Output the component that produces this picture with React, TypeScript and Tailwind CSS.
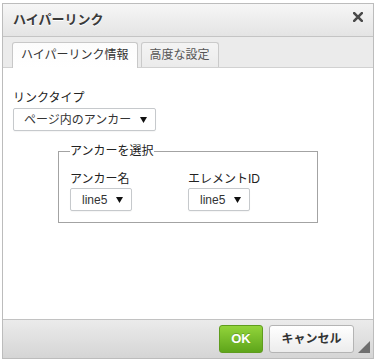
import React from "react";

const FONT = { fontFamily: '"Liberation Sans", "Noto Sans CJK JP", sans-serif' };

function Arrow() {
  return (
    <svg width="7" height="6" viewBox="0 0 7 6" className="shrink-0">
      <polygon points="0,0 7,0 3.5,6" fill="#111" />
    </svg>
  );
}

function Select({ label, className }: { label: string; className: string }) {
  return (
    <div
      className={`flex h-[23px] items-center justify-between rounded-[2px] border border-[#c6c9cc] bg-white pr-[8px] text-[12px] text-[#333] shadow-[0_1px_1px_rgba(0,0,0,0.04)] ${className}`}
    >
      <span>{label}</span>
      <Arrow />
    </div>
  );
}

export default function App() {
  return (
    <div className="h-[362px] w-[377px] bg-white pl-[2px] pt-[3px]" style={FONT}>
      <div className="flex h-[356px] w-[372px] flex-col border border-[#bcbcbc] bg-white">
        {/* title */}
        <div className="flex h-[33px] shrink-0 items-center justify-between border-b border-[#c4c4c4] bg-gradient-to-b from-[#f6f6f6] to-[#e4e4e4] pl-[10px]">
          <span className="text-[13px] font-bold leading-4 text-[#3a3a3a] [text-shadow:0_1px_0_#fff]">
            ハイパーリンク
          </span>
          <svg width="10" height="10" viewBox="0 0 10 10" className="mb-[7px] mr-[10px]">
            <path d="M1.2 1.2 L8.8 8.8 M8.8 1.2 L1.2 8.8" stroke="#4a4a4a" strokeWidth="2.6" strokeLinecap="square" />
          </svg>
        </div>
        {/* tabs */}
        <div className="flex h-[31px] shrink-0 items-end gap-[3px] border-b border-[#d1d1d1] bg-[#ebebeb] pl-[9px]">
          <div className="relative -mb-px flex h-[26px] items-center rounded-t-[3px] border border-b-0 border-[#c8c8c8] bg-gradient-to-b from-[#fcfcfc] to-white px-[8px] pb-px text-[12px] text-[#333]">
            ハイパーリンク情報
          </div>
          <div className="flex h-[25px] items-center rounded-t-[3px] border border-b-0 border-[#cacaca] bg-gradient-to-b from-[#f4f4f4] to-[#ebebeb] px-[8px] text-[12px] text-[#555]">
            高度な設定
          </div>
        </div>
        {/* content */}
        <div className="flex flex-1 flex-col pl-[10px] pt-[22px]">
          <div className="text-[12px] leading-4 text-[#222]">リンクタイプ</div>
          <Select label="ページ内のアンカー" className="mt-[2px] w-[143px] pl-[10px]" />
          <fieldset className="ml-[45px] mt-[12px] w-[260px] border border-[#a3a3a3] px-[11px] pb-[11px] pt-[12px]">
            <legend className="text-[12px] leading-4 text-[#222]">アンカーを選択</legend>
            <div className="flex">
              <div className="flex w-[118px] flex-col">
                <div className="text-[12px] leading-4 text-[#222]">アンカー名</div>
                <Select label="line5" className="mt-px w-[62px] pl-[11px]" />
              </div>
              <div className="flex flex-col">
                <div className="text-[12px] leading-4 text-[#222]">エレメントID</div>
                <Select label="line5" className="mt-px w-[62px] pl-[11px]" />
              </div>
            </div>
          </fieldset>
        </div>
        {/* footer */}
        <div className="relative flex h-[39px] shrink-0 items-start justify-end gap-[6px] border-t border-[#c2c2c2] bg-gradient-to-b from-[#ebebeb] to-[#d5d5d5] pr-[19px] pt-[5px]">
          <button className="flex h-[28px] w-[44px] items-center justify-center rounded-[3px] border border-[#5f9c1e] bg-gradient-to-b from-[#92d43a] to-[#5ea51a] text-[13px] font-bold text-white [text-shadow:0_-1px_0_rgba(0,0,0,0.2)]">
            OK
          </button>
          <button className="flex h-[28px] w-[85px] items-center justify-center rounded-[3px] border border-[#b4b4b4] bg-gradient-to-b from-white to-[#ececec] text-[12px] font-bold text-[#333]">
            キャンセル
          </button>
          <svg width="12" height="12" viewBox="0 0 12 12" className="absolute bottom-[5px] right-[3px]">
            <polygon points="12,0 12,12 0,12" fill="#6e6e6e" />
          </svg>
        </div>
      </div>
    </div>
  );
}
